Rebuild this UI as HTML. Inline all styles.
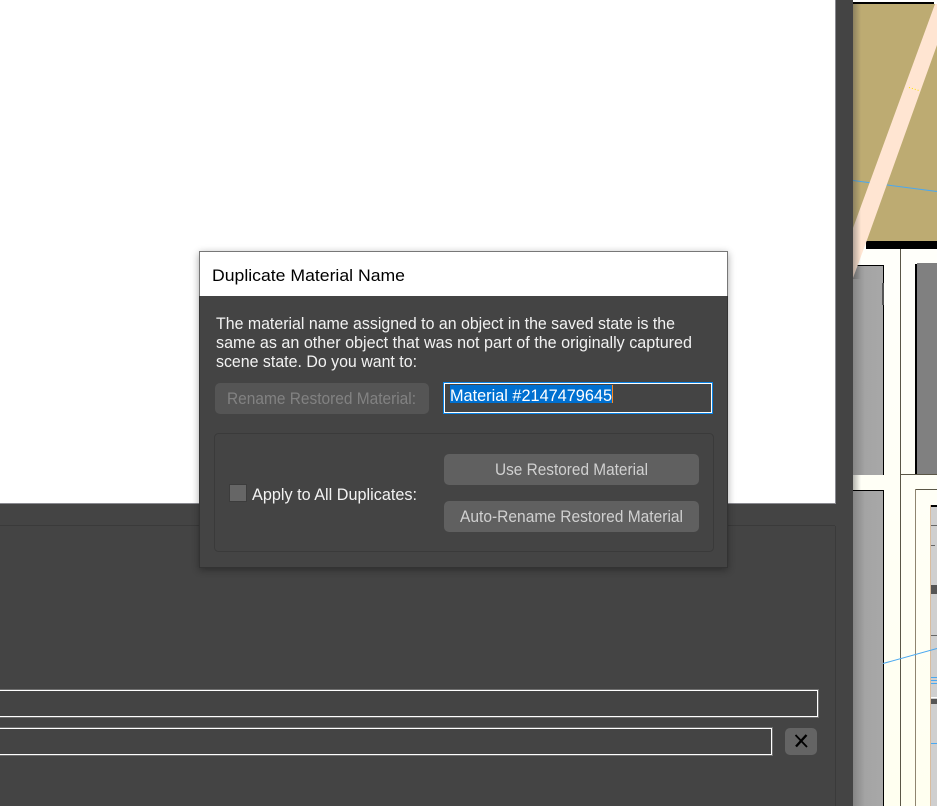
<!DOCTYPE html>
<html><head><meta charset="utf-8"><style>
html,body{margin:0;padding:0;width:937px;height:806px;overflow:hidden;background:#444}
svg{display:block}
text{font-family:"Liberation Sans",sans-serif;font-size:16.5px}
</style></head><body>
<svg width="937" height="806" viewBox="0 0 937 806" xmlns="http://www.w3.org/2000/svg">
<defs>
<linearGradient id="g" x1="0" x2="1" y1="0" y2="0"><stop offset="0" stop-color="#858585"/><stop offset=".4" stop-color="#a4a4a4"/><stop offset="1" stop-color="#a8a8a8"/></linearGradient>
<linearGradient id="c" x1="0" x2="0" y1="0" y2="1"><stop offset="0" stop-color="#ffffff"/><stop offset="1" stop-color="#fffff0"/></linearGradient>
<linearGradient id="f" x1="0" x2="1" y1="0" y2="0"><stop offset="0" stop-color="#444" stop-opacity=".4"/><stop offset="1" stop-color="#444" stop-opacity="0"/></linearGradient>
<filter id="s" x="-5%" y="-5%" width="110%" height="110%"><feGaussianBlur stdDeviation="4"/></filter>
</defs>
<rect width="937" height="806" fill="#444"/>
<!-- white viewport -->
<rect width="835" height="503" fill="#fff"/>
<rect x="835" width="1" height="504" fill="#8a8a90"/>
<rect y="503" width="835" height="1" fill="#8a8a90"/>
<!-- bottom panel -->
<rect y="525" width="835" height="1" fill="#3a3a3a"/>
<rect x="835" y="526" width="1" height="280" fill="#3a3a3a"/>
<rect x="-2" y="689.5" width="820.5" height="28" fill="none" stroke="#6e6e6e" stroke-width="1"/>
<rect x="-2" y="690.5" width="819.5" height="26" fill="none" stroke="#fff" stroke-width="1"/>
<rect x="-2" y="727.5" width="774.5" height="28" fill="none" stroke="#6e6e6e" stroke-width="1"/>
<rect x="-2" y="728.5" width="773.5" height="26" fill="none" stroke="#fff" stroke-width="1"/>
<rect x="785" y="728" width="32" height="27" rx="5" fill="#646464"/>
<path d="M795.5 735L807 747" stroke="#000" stroke-width="1.8" fill="none"/>
<path d="M806.5 735L796 746.5" stroke="#000" stroke-width="2.4" fill="none"/>
<!-- right viewport -->
<rect x="853" y="0" width="84" height="806" fill="url(#c)"/>
<rect x="853" y="4" width="84" height="237" fill="#bdab72"/>
<rect x="853" y="2" width="81" height="2" fill="#000"/>
<rect x="866" y="241" width="71" height="8" fill="#000"/>
<rect x="900" y="249" width="1" height="557" fill="#5a5646"/>
<!-- gray blocks -->
<rect x="853" y="265" width="31" height="210" fill="#000"/>
<rect x="853" y="266" width="30" height="209" fill="url(#g)"/>
<rect x="882" y="283" width="2" height="22" fill="#555"/>
<rect x="853" y="490" width="31" height="316" fill="#000"/>
<rect x="853" y="491" width="30" height="315" fill="url(#g)"/>
<rect x="915" y="264" width="22" height="210" fill="#000"/>
<rect x="917" y="263" width="20" height="211" fill="#808080"/>
<rect x="900" y="474" width="37" height="1" fill="#5a5646"/>
<rect x="915" y="489" width="22" height="1" fill="#5a5646"/>
<rect x="915" y="489" width="1" height="317" fill="#8f8570"/>
<rect x="930" y="505" width="7" height="301" fill="#cfcfcf"/>
<rect x="930" y="505" width="1" height="301" fill="#d8bc9e"/>
<rect x="931" y="505" width="6" height="2" fill="#000"/>
<rect x="931" y="525" width="6" height="1" fill="#666"/>
<rect x="931" y="545" width="4" height="1" fill="#666"/>
<rect x="931" y="585" width="6" height="9" fill="#555"/>
<rect x="931" y="635" width="6" height="1" fill="#666"/>
<rect x="931" y="697" width="6" height="1" fill="#fff"/>
<rect x="931" y="699" width="6" height="5" fill="#555"/>
<rect x="931" y="677" width="6" height="1" fill="#4aa8f0"/>
<rect x="931" y="680" width="6" height="1" fill="#4aa8f0"/>
<rect x="931" y="683" width="6" height="1" fill="#4aa8f0"/>
<rect x="931" y="743" width="6" height="1" fill="#4aa8f0"/>
<!-- blue lines -->
<path d="M853 180.5L937 191.5" stroke="#4aa8f0" stroke-width="1" fill="none"/>
<path d="M883 663.5L937 648.5" stroke="#4aa8f0" stroke-width="1" fill="none"/>
<!-- peach stripe -->
<polygon points="935,4 937,4 937,45 867,240 853,278 853,228" fill="#ffe5d2"/>
<path d="M909 87.5L919 90.5" stroke="#ffe000" stroke-width="1" stroke-dasharray="1 2" fill="none"/>
<rect x="853" y="4" width="8" height="275" fill="url(#f)"/>
<rect x="853" y="475" width="8" height="15" fill="url(#f)"/>
<!-- dialog -->
<rect x="199" y="253" width="529" height="317" fill="#000" opacity=".35" filter="url(#s)"/>
<rect x="199" y="251" width="529" height="317" fill="#444"/>
<rect x="199.5" y="251.5" width="528" height="316" fill="none" stroke="#333" />
<rect x="199" y="251" width="529" height="45" fill="#777"/>
<rect x="200" y="252" width="527" height="44" fill="#fff"/>
<text x="212" y="281" fill="#000" style="font-size:17px" textLength="193" lengthAdjust="spacingAndGlyphs">Duplicate Material Name</text>
<text x="216" y="329" fill="#f2f2f2" textLength="459" lengthAdjust="spacingAndGlyphs">The material name assigned to an object in the saved state is the</text>
<text x="216" y="348" fill="#f2f2f2" textLength="476" lengthAdjust="spacingAndGlyphs">same as an other object that was not part of the originally captured</text>
<text x="216" y="367" fill="#f2f2f2" textLength="201" lengthAdjust="spacingAndGlyphs">scene state. Do you want to:</text>
<rect x="215" y="383" width="214" height="31" rx="5" fill="#555"/>
<text x="227" y="404" fill="#828282" textLength="189" lengthAdjust="spacingAndGlyphs">Rename Restored Material:</text>
<rect x="443.5" y="382.5" width="269" height="31" fill="#444" stroke="#0a84e6"/>
<rect x="444.5" y="383.5" width="267" height="29" fill="none" stroke="#fff"/>
<rect x="450" y="385" width="162" height="18" fill="#0070d0"/>
<rect x="612" y="385" width="1" height="18" fill="#ff8a20"/>
<text x="450" y="401" fill="#fff" textLength="162" lengthAdjust="spacingAndGlyphs">Material #2147479645</text>
<rect x="214.5" y="433.5" width="499" height="118" rx="4" fill="none" stroke="#3a3a3a"/>
<rect x="229.5" y="484.5" width="17" height="17" fill="#666" stroke="#3c3c3c"/>
<text x="252" y="500" fill="#f2f2f2" textLength="165" lengthAdjust="spacingAndGlyphs">Apply to All Duplicates:</text>
<rect x="444" y="454" width="255" height="31" rx="5" fill="#606060"/>
<text x="495" y="475" fill="#d0d0d0" textLength="153" lengthAdjust="spacingAndGlyphs">Use Restored Material</text>
<rect x="444" y="501" width="255" height="31" rx="5" fill="#606060"/>
<text x="460" y="522" fill="#d0d0d0" textLength="223" lengthAdjust="spacingAndGlyphs">Auto-Rename Restored Material</text>
</svg>
</body></html>
